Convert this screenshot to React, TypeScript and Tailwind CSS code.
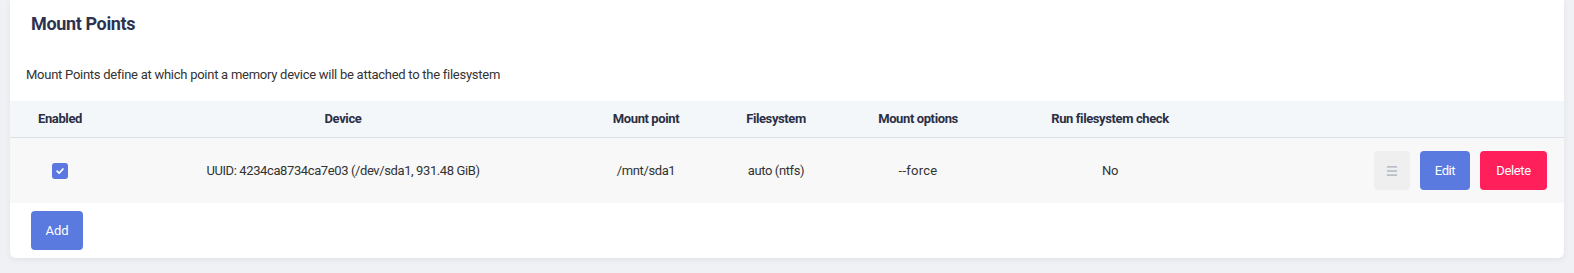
import { Menu } from "lucide-react";

const cols = "grid grid-cols-[100px_466px_140px_120px_164px_220px_1fr]";

export default function App() {
  return (
    <div className="h-[273px] w-full bg-[#f0f1f4] px-[10px] font-['Roboto',sans-serif] text-[#2b2f45]">
      <div className="rounded-b-md bg-white pb-2 shadow-[0_2px_6px_rgba(0,0,0,0.06)]">
        <h2 className="px-[21px] pt-[13px] text-[18px] font-bold leading-[22px] tracking-[-0.02em] text-[#2d3250]">
          Mount Points
        </h2>
        <p className="mt-[32px] px-4 text-[13px] leading-[16px] tracking-[-0.02em] text-[#333]">
          Mount Points define at which point a memory device will be attached to the filesystem
        </p>
        <div className="mt-[18px]">
          <div className={`${cols} h-[37px] items-center border-b border-[#dcdfe4] bg-[#f4f7fa] text-center text-[13px] font-bold tracking-[-0.03em]`}>
            <div>Enabled</div>
            <div>Device</div>
            <div>Mount point</div>
            <div>Filesystem</div>
            <div>Mount options</div>
            <div>Run filesystem check</div>
            <div />
          </div>
          <div className={`${cols} h-[65px] items-center bg-[#f8f8f8] text-center text-[13px] tracking-[-0.03em] text-[#333]`}>
            <div className="flex justify-center">
              <span className="flex h-4 w-4 items-center justify-center rounded-[3px] bg-[#5a78e0]">
                <svg viewBox="0 0 12 12" className="h-[10px] w-[10px]">
                  <path d="M2.5 6.2 5 8.6 9.6 3.6" fill="none" stroke="white" strokeWidth="2" strokeLinecap="round" strokeLinejoin="round" />
                </svg>
              </span>
            </div>
            <div>UUID: 4234ca8734ca7e03 (/dev/sda1, 931.48 GiB)</div>
            <div>/mnt/sda1</div>
            <div>auto (ntfs)</div>
            <div className="tracking-[0.02em]">--force</div>
            <div>No</div>
            <div className="flex justify-end gap-[10px] pr-[17px]">
              <button className="flex h-[39px] w-9 items-center justify-center rounded bg-[#efefef] text-[#8190a5]">
                <Menu size={14} strokeWidth={1.5} />
              </button>
              <button className="h-[39px] w-[50px] rounded bg-[#5a7ae0] text-[13px] text-white">Edit</button>
              <button className="h-[39px] w-[67px] rounded bg-[#ff1f5b] text-[13px] text-white">Delete</button>
            </div>
          </div>
        </div>
        <div className="px-[21px] pt-2">
          <button className="h-[39px] w-[52px] rounded bg-[#5a7ae0] text-[13px] text-white">Add</button>
        </div>
      </div>
    </div>
  );
}
